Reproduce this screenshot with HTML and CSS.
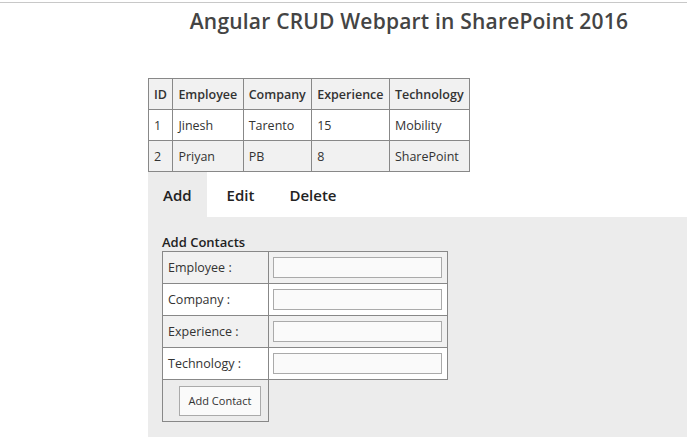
FILE: index.html
```html
<!DOCTYPE html>
<html lang="en">
    <head>
        <meta charset="UTF-8">
        <meta name="viewport" content="width=device-width, initial-scale=1.0">
        <title>Angular CRUD Webpart</title>
        <link rel="stylesheet" href="styles.css">
    </head>
    <body>
        <div class="top-line"></div>

        <div class="page">
            <h1 class="page-title">Angular CRUD Webpart in SharePoint 2016</h1>

            <table class="contacts">
                <tr class="head-row">
                    <th>ID</th>
                    <th>Employee</th>
                    <th>Company</th>
                    <th>Experience</th>
                    <th>Technology</th>
                </tr>
                <tr>
                    <td>1</td>
                    <td>Jinesh</td>
                    <td>Tarento</td>
                    <td>15</td>
                    <td>Mobility</td>
                </tr>
                <tr class="shaded">
                    <td>2</td>
                    <td>Priyan</td>
                    <td>PB</td>
                    <td>8</td>
                    <td>SharePoint</td>
                </tr>
            </table>

            <div class="tabs">
                <a class="tab active">Add</a>
                <a class="tab">Edit</a>
                <a class="tab">Delete</a>
            </div>

            <div class="tab-panel">
                <div class="panel-title">Add Contacts</div>
                <table class="contact-form">
                    <tr class="shaded">
                        <td class="label">Employee :</td>
                        <td class="field"><input type="text"></td>
                    </tr>
                    <tr>
                        <td class="label">Company :</td>
                        <td class="field"><input type="text"></td>
                    </tr>
                    <tr class="shaded">
                        <td class="label">Experience :</td>
                        <td class="field"><input type="text"></td>
                    </tr>
                    <tr>
                        <td class="label">Technology :</td>
                        <td class="field"><input type="text"></td>
                    </tr>
                    <tr class="button-row">
                        <td class="button-cell"><button class="add-button">Add Contact</button></td>
                        <td class="empty-cell"></td>
                    </tr>
                </table>
            </div>
        </div>
    </body>
</html>
```

FILE: styles.css
```css
body {
    margin: 0;
    padding-top: 2px;
    background-color: #fff;
    font-family: "Open Sans", sans-serif;
    color: #333;
}

.top-line {
    border-top: 1px solid #c8c8c8;
}

.page {
    margin-left: 148px;
}

.page-title {
    margin: 5px 0 0;
    padding-right: 17px;
    height: 70px;
    text-align: center;
    font-size: 21px;
    line-height: 26px;
    font-weight: 600;
    letter-spacing: 0.2px;
    color: #444;
}

.contacts {
    border-collapse: collapse;
    font-size: 12.5px;
}

.contacts th,
.contacts td {
    border: 1px solid #888;
    height: 30px;
    padding: 0 5.4px 0 5px;
    text-align: left;
}

.contacts th {
    font-weight: 600;
    background-color: #f1f1f1;
}

.contacts .shaded td {
    background-color: #f1f1f1;
}

.tabs {
    display: flex;
    height: 45px;
}

.tab {
    display: flex;
    align-items: center;
    padding: 0 15px;
    margin-right: 5px;
    font-size: 15px;
    font-weight: 600;
    color: #222;
    cursor: pointer;
}

.tab.active {
    background-color: #ececec;
}

.tab-panel {
    background-color: #ececec;
    padding: 16px 14px 17px;
    height: 187px;
}

.panel-title {
    font-size: 13px;
    font-weight: 600;
    line-height: 18px;
    color: #222;
}

.contact-form {
    border-collapse: collapse;
    font-size: 12.5px;
}

.contact-form td {
    border: 1px solid #888;
    height: 31px;
    padding: 0 5px;
    background-color: #fff;
}

.contact-form .field {
    padding: 0 5px 0 4px;
}

.contact-form .shaded td {
    background-color: #f1f1f1;
}

.contact-form .label {
    width: 95px;
}

.contact-form input {
    display: block;
    width: 169px;
    height: 21px;
    box-sizing: border-box;
    border: 1px solid #aaa;
    background-color: #fafafa;
    margin: 0;
}

.contact-form .button-row td {
    height: 41px;
    background-color: #ececec;
    padding: 0 0 0 16px;
}

.contact-form .empty-cell {
    border: none;
    border-top: 1px solid #888;
}

.add-button {
    display: block;
    width: 82px;
    height: 30px;
    border: 1px solid #aaa;
    background-color: #fafafa;
    font-family: "Open Sans", sans-serif;
    font-size: 11px;
    color: #333;
    cursor: pointer;
}
```
